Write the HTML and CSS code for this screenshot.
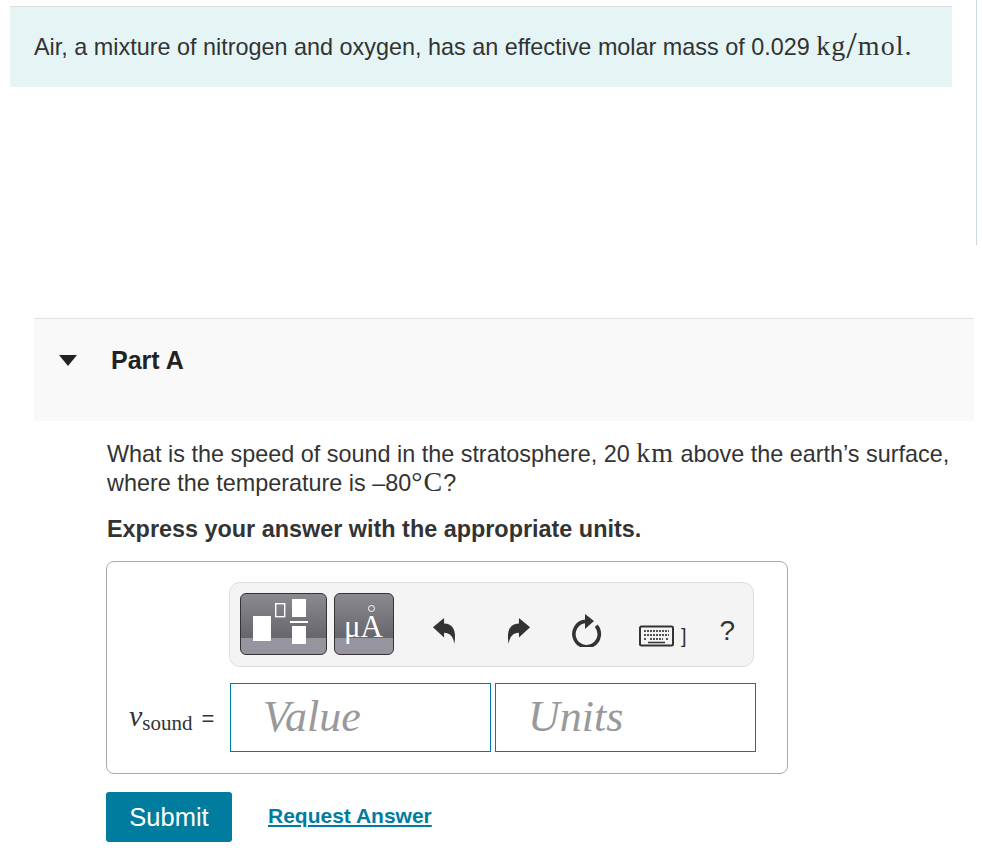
FILE: index.html
```html
<!DOCTYPE html>
<html lang="en">

<head>
    <meta charset="UTF-8">
    <title>Part A</title>
    <link rel="stylesheet" href="styles.css">
</head>

<body>
    <div class="side-line"></div>

    <div class="intro">
        <p>Air, a mixture of nitrogen and oxygen, has an effective molar mass of 0.029 <span class="math">kg<span class="slash">/</span>mol.</span></p>
    </div>

    <div class="part">
        <div class="part-header">
            <span class="caret"></span>
            <h2>Part A</h2>
        </div>

        <div class="part-body">
            <p class="question">What is the speed of sound in the stratosphere, 20 <span class="math">km</span> above the earth’s surface, where the temperature is –80<span class="math">°C</span>?</p>
            <p class="instruction">Express your answer with the appropriate units.</p>

            <div class="answer-box">
                <div class="toolbar">
                    <button class="tpl-btn tpl-wide" aria-label="Templates">
                        <svg width="87" height="62" viewBox="0 0 87 62">
                            <rect x="13" y="23" width="18" height="25" fill="#fff"/>
                            <rect x="35.7" y="10.7" width="9" height="13" fill="none" stroke="#fff" stroke-width="1.4"/>
                            <rect x="52" y="6" width="14" height="18" fill="#fff"/>
                            <rect x="50" y="28" width="18" height="2" fill="#fff"/>
                            <rect x="52" y="33" width="14" height="18" fill="#fff"/>
                        </svg>
                    </button>
                    <button class="tpl-btn tpl-units" aria-label="Units">
                        <span class="ring"></span>
                        <span class="mu">μA</span>
                    </button>

                    <div class="tools">
                        <svg class="tool tool-undo" width="26" height="30" viewBox="0 0 28 32"><path d="M1 13 L13 3 V9 C22 9 27 16 24 31 C23 23 19 19 13 19 V24 Z" fill="#333"/></svg>
                        <svg class="tool tool-redo" width="26" height="30" viewBox="0 0 28 32"><path d="M27 13 L15 3 V9 C6 9 1 16 4 31 C5 23 9 19 15 19 V24 Z" fill="#333"/></svg>
                        <svg class="tool tool-reset" width="30" height="34" viewBox="0 0 30 34"><path d="M13 8.4 A12.7 12.7 0 1 0 24.2 12.7" fill="none" stroke="#333" stroke-width="3.6"/><path d="M13 1 L22 8 L13 16 Z" fill="#333"/></svg>
                        <svg class="tool tool-keys" width="35" height="22" viewBox="0 0 35 22">
                            <rect x="1" y="1.5" width="33" height="19" rx="1.5" fill="#f4f4f4" stroke="#333" stroke-width="2"/>
                            <path d="M5 6 H30 M5 10 H30 M5 14 H8 M11 14 H24 M27 14 H30" stroke="#555" stroke-width="2" stroke-dasharray="2 1"/>
                            <path d="M9 17.5 H26" stroke="#333" stroke-width="1.5"/>
                        </svg>
                        <span class="bracket">]</span>
                        <span class="help">?</span>
                    </div>
                </div>

                <div class="answer-row">
                    <span class="var"><i>v</i><sub>sound</sub><span class="equals">=</span></span>
                    <div class="field">Value</div>
                    <div class="field">Units</div>
                </div>
            </div>

            <div class="actions">
                <button class="submit">Submit</button>
                <a class="request" href="#">Request Answer</a>
            </div>
        </div>
    </div>
</body>

</html>
```

FILE: styles.css
```css
body {
    margin: 0;
    padding: 6px 0 0 10px;
    background: #fff;
    color: #333;
    font-family: "Liberation Sans", Arial, sans-serif;
    font-size: 23.4px;
}

p {
    margin: 0;
}

.math {
    display: inline-block;
    font-family: "Liberation Serif", "Times New Roman", serif;
    font-size: 28px;
    letter-spacing: 1px;
    line-height: 24px;
}

.slash {
    font-size: 38px;
    line-height: 20px;
    vertical-align: -3px;
}

.side-line {
    position: absolute;
    top: 0;
    left: 976px;
    width: 1px;
    height: 245px;
    background-color: #c9d8e6;
}

.intro {
    width: 942px;
    height: 81px;
    box-sizing: border-box;
    padding: 0 24px;
    display: flex;
    align-items: center;
    background-color: #e5f5f6;
    border-top: 1px solid #dcdfe0;
}

.part {
    width: 940px;
    margin: 231px 0 0 24px;
}

.part-header {
    height: 103px;
    box-sizing: border-box;
    padding: 27px 0 0 25px;
    display: flex;
    background-color: #f9f9f9;
    border-top: 1px solid #e2e2e2;
}

.caret {
    width: 0;
    height: 0;
    margin-top: 9px;
    border-left: 9.5px solid transparent;
    border-right: 9.5px solid transparent;
    border-top: 11px solid #222;
}

.part-header h2 {
    margin: 0 0 0 34px;
    font-size: 25px;
    line-height: 28px;
    color: #222;
}

.part-body {
    padding: 19px 0 0 72px;
}

.question {
    width: 860px;
    padding-left: 1px;
    line-height: 29px;
}

.instruction {
    margin-top: 17px;
    padding-left: 1px;
    line-height: 29px;
    font-weight: bold;
}

.answer-box {
    width: 682px;
    height: 213px;
    box-sizing: border-box;
    margin-top: 17px;
    padding: 20px 0 0 22px;
    border: 1px solid #aaa;
    border-radius: 8px;
}

.toolbar {
    width: 525px;
    height: 85px;
    box-sizing: border-box;
    margin-left: 100px;
    padding: 10px 0 0 10px;
    display: flex;
    gap: 7px;
    background-color: #f4f4f4;
    border: 1px solid #ddd;
    border-radius: 11px;
}

.tpl-btn {
    position: relative;
    height: 62px;
    padding: 0;
    border: 1px solid #333;
    border-radius: 6px;
    background: linear-gradient(#8b8a90, #65656a 74%, #96949f 74%);
    overflow: hidden;
}

.tpl-wide {
    width: 87px;
}

.tpl-wide svg {
    display: block;
    margin: -1px;
}

.tpl-units {
    width: 60px;
    color: #fff;
    font-family: "Liberation Serif", serif;
}

.mu {
    position: absolute;
    left: 9px;
    top: 15px;
    font-size: 31px;
    line-height: 36px;
}

.ring {
    position: absolute;
    left: 33px;
    top: 11px;
    width: 5px;
    height: 5px;
    border: 1px solid #fff;
    border-radius: 50%;
}

.tools {
    display: flex;
    align-items: center;
    height: 62px;
    padding-top: 12px;
    box-sizing: border-box;
}

.tool-undo {
    margin-left: 31px;
}

.tool-redo {
    margin-left: 47px;
}

.tool-reset {
    margin-left: 41px;
}

.tool-keys {
    margin: 12px 0 0 37px;
}

.bracket {
    margin: 12px 0 0 7px;
    font-size: 20px;
}

.help {
    margin: 2px 0 0 33px;
    font-size: 28px;
}

.answer-row {
    display: flex;
    align-items: center;
    margin-top: 16px;
}

.var {
    width: 101px;
    margin-bottom: 4px;
    font-family: "Liberation Serif", serif;
    font-size: 30px;
}

.var sub {
    font-size: 21px;
    vertical-align: -4px;
    line-height: 0;
}

.equals {
    margin-left: 9px;
    font-family: "Liberation Sans", sans-serif;
    font-size: 22px;
}

.field {
    width: 261px;
    height: 69px;
    box-sizing: border-box;
    margin-right: 4px;
    padding-left: 32px;
    border: 1px solid #007c9f;
    background-color: #fff;
    color: #999;
    font-family: "Liberation Serif", serif;
    font-size: 44px;
    font-style: italic;
    line-height: 66px;
}

.actions {
    display: flex;
    align-items: center;
    margin-top: 18px;
}

.submit {
    width: 126px;
    height: 50px;
    padding: 0;
    border: none;
    border-radius: 3px;
    background-color: #007c9f;
    color: #fff;
    font-family: "Liberation Sans", sans-serif;
    font-size: 25.5px;
}

.request {
    margin: 0 0 2px 36px;
    color: #007c9f;
    font-size: 21px;
    font-weight: bold;
    text-decoration: underline;
}
```
